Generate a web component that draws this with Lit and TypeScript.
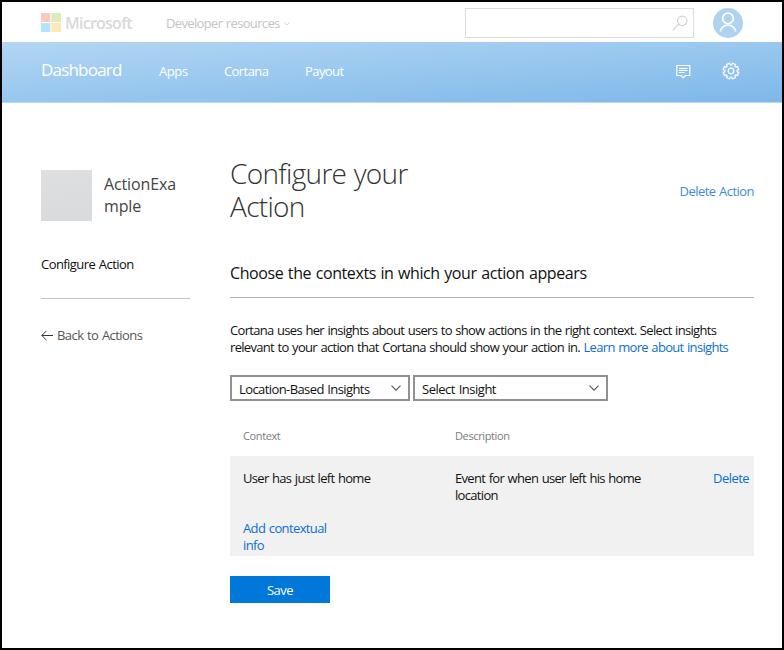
import { LitElement, html, css } from "lit";
import { customElement } from "lit/decorators.js";

/** Outline of an eight-toothed gear centred on (9, 9), with a notch at the top. */
const gearPath = (() => {
  const points: string[] = [];
  for (let tooth = 0; tooth < 8; tooth++) {
    for (const [offset, radius] of [[-15, 6.2], [-12.5, 8], [12.5, 8], [15, 6.2]]) {
      const angle = ((tooth * 45 + 22.5 + offset) * Math.PI) / 180;
      points.push(`${(9 + radius * Math.sin(angle)).toFixed(2)} ${(9 - radius * Math.cos(angle)).toFixed(2)}`);
    }
  }
  return `M${points.join("L")}Z`;
})();

@customElement("app-root")
export class AppRoot extends LitElement {
  static styles = css`
    :host {
      display: flex;
      flex-direction: column;
      box-sizing: border-box;
      width: 784px;
      height: 650px;
      border: 2px solid #000;
      background: #fff;
      color: #111;
      font: 13px/17px "Open Sans", "Noto Sans", sans-serif;
      letter-spacing: -0.68px;
      word-spacing: 0.75px;
      overflow: hidden;
    }
    * { box-sizing: border-box; }
    a { color: #0a6fd6; text-decoration: none; white-space: nowrap; }
    svg { display: block; flex: none; fill: none; }
    h1, h2, p { margin: 0; font-weight: 400; }
    span { white-space: nowrap; }
    .top { display: flex; align-items: center; height: 40px; padding: 1px 39px 0 39px; }
    .brand { font-size: 16px; font-weight: 600; color: #d9d9d9; margin-left: 4px; width: 67px; letter-spacing: -0.75px; padding-top: 1px; }
    .dev { color: #c4c4c4; margin-left: 34px; letter-spacing: -0.65px; padding-top: 1px; }
    .top .chev { margin: 3px 0 0 4px; }
    .search { display: flex; align-items: center; justify-content: flex-end; width: 229px; height: 30px; border: 1px solid #dcdcdc; margin-left: auto; padding-right: 5px; }
    .avatar { margin-left: 19px; }
    .nav { display: flex; align-items: center; height: 61px; padding: 0 42px 2px 39px; color: #fff; background: linear-gradient(176deg, #b3d6f3 0%, #7fb9ea 97%); border-bottom: 1px solid #bcdaf3; flex: none; letter-spacing: -0.57px; }
    .dash { font-size: 17px; width: 118px; padding-bottom: 3px; letter-spacing: -0.8px; }
    .apps { width: 65px; letter-spacing: -0.4px; }
    .cort { width: 81px; }
    .nav .msg { margin-left: auto; margin-right: 31px; }
    .body { display: grid; grid-template-columns: 149px 524px; column-gap: 40px; padding: 55px 0 0 39px; }
    .side { padding-top: 12px; letter-spacing: -0.56px; }
    .app { display: flex; gap: 12px; font-size: 16px; line-height: 22px; color: #444; letter-spacing: -0.12px; }
    .tile { width: 51px; height: 51px; background: linear-gradient(170deg, #dedfe1, #d8dadb); }
    .app div:last-child { padding-top: 3px; }
    .cfg { margin-top: 35px; }
    .side hr { border: 0; border-top: 1px solid #c4c4c4; margin: 25px 0 27px; }
    .back { display: flex; align-items: center; gap: 4px; color: #555; }
    .back span { padding-top: 1px; }
    .head { display: flex; justify-content: space-between; }
    h1 { font-size: 28px; line-height: 33px; font-weight: 300; color: #333; margin-top: -1px; }
    .head a { margin-top: 25px; color: #3c8cd8; letter-spacing: -0.54px; }
    h2 { font-size: 16px; line-height: 22px; margin-top: 39px; padding-bottom: 13px; border-bottom: 1px solid #b4b4b4; letter-spacing: -0.4px; }
    .intro { margin-top: 24px; }
    .selects { display: flex; gap: 3px; margin-top: 19px; letter-spacing: -0.59px; }
    .select { display: flex; align-items: center; justify-content: space-between; height: 26px; border: 2px solid #919191; padding: 0 7px; }
    .select span { padding-top: 2px; }
    .s1 { width: 180px; }
    .s2 { width: 195px; letter-spacing: -0.48px; }
    .cols { display: grid; grid-template-columns: 212px 1fr auto; padding: 0 5px 0 13px; }
    .th { margin-top: 26px; font-size: 11px; color: #7c7c7c; letter-spacing: -0.38px; }
    .row { margin-top: 12px; height: 100px; background: #f1f1f1; padding-top: 14px; align-content: start; }
    .del { letter-spacing: -0.56px; }
    .add { margin-top: 16px; letter-spacing: -0.62px; }
    .save { width: 100px; height: 27px; margin-top: 20px; border: 0; background: #0078d9; color: #fff; font: inherit; letter-spacing: -0.56px; line-height: 27px; padding: 1px 0 0; text-align: center; }
  `;

  private chevron(color: string, w: number) {
    return html`<svg class="chev" width=${w} height=${w * 0.6} viewBox="0 0 10 6"><path d="M.5 .6 5 5.1 9.5 .6" stroke=${color} stroke-width="1.1" /></svg>`;
  }

  render() {
    return html`
      <div class="top">
        <svg width="20" height="19" viewBox="0 0 20 19"><path fill="#fbcabd" d="M0 0h9.300v9H0z" /><path fill="#dbebb9" d="M10.300 0H20v9h-9.700z" /><path fill="#b5e3fb" d="M0 10h9.300v9H0z" /><path fill="#ffe8b2" d="M10.300 10H20v9h-9.700z" /></svg>
        <span class="brand">Microsoft</span>
        <span class="dev">Developer resources</span>
        ${this.chevron("#c0c0c0", 6)}
        <div class="search"><svg width="16" height="16" viewBox="0 0 16 16" stroke="#cfcfcf" stroke-width="1.1"><circle cx="10.2" cy="5.8" r="4.7" /><path d="M6.8 9.2.8 15.2" /></svg></div>
        <svg class="avatar" width="30" height="30" viewBox="0 0 30 30"><circle cx="15" cy="15" r="15" fill="#afd3ef" /><g stroke="#fff" stroke-width="1.6"><circle cx="15" cy="10.4" r="5.3" /><path d="M7.3 23.500a7.800 7.800 0 0 1 15.400 0" /></g></svg>
      </div>
      <div class="nav">
        <div class="dash"><span>Dashboard</span></div>
        <div class="apps"><span>Apps</span></div>
        <div class="cort"><span>Cortana</span></div>
        <span>Payout</span>
        <svg class="msg" width="15" height="15" viewBox="0 0 15 15" stroke="#fff"><path d="M.8 1.500h13v10H9.500L7.300 13.700 5.100 11.500H.8z" stroke-width="1.200" /><path d="M3 4.500h8.500M3 6.500h8.500M3 8.500h5.500" /></svg>
        <svg width="18" height="18" viewBox="0 0 18 18" stroke="#fff" stroke-width="1.200" stroke-linejoin="round"><path d=${gearPath} /><circle cx="9" cy="9" r="2.800" /></svg>
      </div>
      <div class="body">
        <div class="side">
          <div class="app"><div class="tile"></div><div><span>ActionExa</span><br /><span>mple</span></div></div>
          <div class="cfg"><span>Configure Action</span></div>
          <hr />
          <div class="back"><svg width="12" height="11" viewBox="0 0 12 11" stroke="#333"><path d="M.8 5.500H12M5.500.8.8 5.500l4.700 4.700" /></svg><span>Back to Actions</span></div>
        </div>
        <div class="main">
          <div class="head"><h1><span>Configure your</span><br /><span>Action</span></h1><a href="#"><span>Delete Action</span></a></div>
          <h2><span>Choose the contexts in which your action appears</span></h2>
          <p class="intro"><span>Cortana uses her insights about users to show actions in the right context. Select insights</span><br /><span>relevant to your action that Cortana should show your action in.</span> <a href="#"><span>Learn more about insights</span></a></p>
          <div class="selects">
            <div class="select s1"><span>Location-Based Insights</span>${this.chevron("#555", 10)}</div>
            <div class="select s2"><span>Select Insight</span>${this.chevron("#555", 10)}</div>
          </div>
          <div class="cols th"><span>Context</span><span>Description</span></div>
          <div class="cols row">
            <div><span>User has just left home</span></div>
            <div><span>Event for when user left his home</span><br /><span>location</span></div>
            <a class="del" href="#"><span>Delete</span></a>
            <a class="add" href="#"><span>Add contextual</span><br /><span>info</span></a>
          </div>
          <button class="save"><span>Save</span></button>
        </div>
      </div>
    `;
  }
}
